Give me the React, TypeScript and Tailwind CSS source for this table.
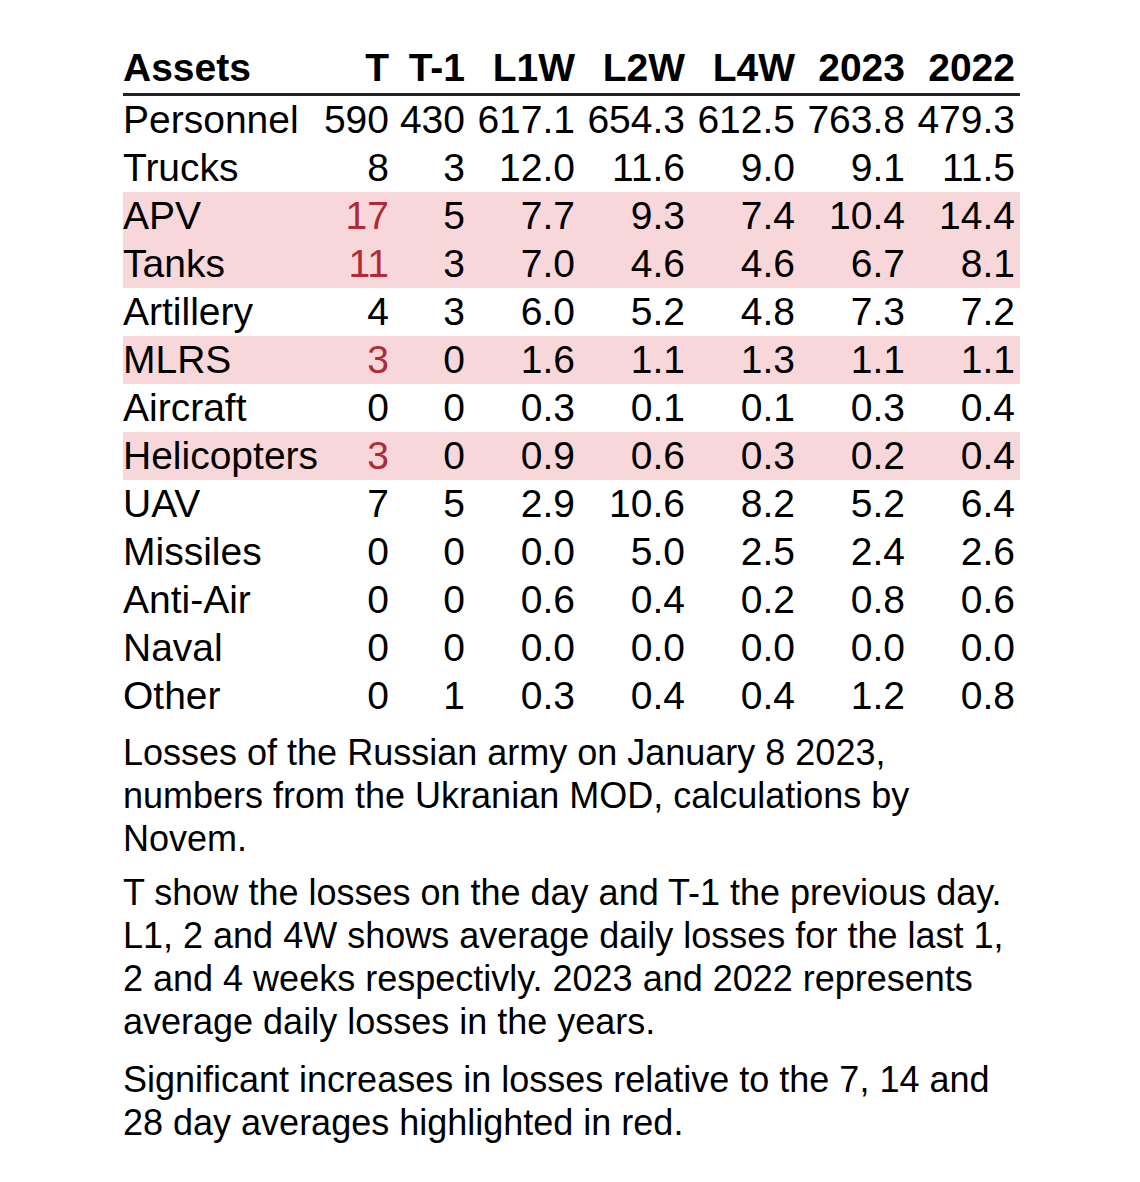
type Row = {
  name: string;
  t: string;
  t1: string;
  l1w: string;
  l2w: string;
  l4w: string;
  y2023: string;
  y2022: string;
  hot?: boolean;
};

const rows: Row[] = [
  { name: 'Personnel', t: '590', t1: '430', l1w: '617.1', l2w: '654.3', l4w: '612.5', y2023: '763.8', y2022: '479.3' },
  { name: 'Trucks', t: '8', t1: '3', l1w: '12.0', l2w: '11.6', l4w: '9.0', y2023: '9.1', y2022: '11.5' },
  { name: 'APV', t: '17', t1: '5', l1w: '7.7', l2w: '9.3', l4w: '7.4', y2023: '10.4', y2022: '14.4', hot: true },
  { name: 'Tanks', t: '11', t1: '3', l1w: '7.0', l2w: '4.6', l4w: '4.6', y2023: '6.7', y2022: '8.1', hot: true },
  { name: 'Artillery', t: '4', t1: '3', l1w: '6.0', l2w: '5.2', l4w: '4.8', y2023: '7.3', y2022: '7.2' },
  { name: 'MLRS', t: '3', t1: '0', l1w: '1.6', l2w: '1.1', l4w: '1.3', y2023: '1.1', y2022: '1.1', hot: true },
  { name: 'Aircraft', t: '0', t1: '0', l1w: '0.3', l2w: '0.1', l4w: '0.1', y2023: '0.3', y2022: '0.4' },
  { name: 'Helicopters', t: '3', t1: '0', l1w: '0.9', l2w: '0.6', l4w: '0.3', y2023: '0.2', y2022: '0.4', hot: true },
  { name: 'UAV', t: '7', t1: '5', l1w: '2.9', l2w: '10.6', l4w: '8.2', y2023: '5.2', y2022: '6.4' },
  { name: 'Missiles', t: '0', t1: '0', l1w: '0.0', l2w: '5.0', l4w: '2.5', y2023: '2.4', y2022: '2.6' },
  { name: 'Anti-Air', t: '0', t1: '0', l1w: '0.6', l2w: '0.4', l4w: '0.2', y2023: '0.8', y2022: '0.6' },
  { name: 'Naval', t: '0', t1: '0', l1w: '0.0', l2w: '0.0', l4w: '0.0', y2023: '0.0', y2022: '0.0' },
  { name: 'Other', t: '0', t1: '1', l1w: '0.3', l2w: '0.4', l4w: '0.4', y2023: '1.2', y2022: '0.8' },
];

// asset | T | T-1 | L1W | L2W | L4W | 2023 | 2022
const cols = 'grid grid-cols-[189px_82px_76px_110px_110px_110px_110px_110px]';

export default function App() {
  return (
    <div className="min-h-[1182px] bg-white font-['Liberation_Sans',Arial,sans-serif] text-black">
      <div className="ml-[123px] w-[897px] pt-[44px]">
        <div className={`${cols} h-[48px] text-[39px] font-bold leading-[48px]`}>
          <div>Assets</div>
          <div className="pr-[5px] text-right">T</div>
          <div className="pr-[5px] text-right">T-1</div>
          <div className="pr-[5px] text-right">L1W</div>
          <div className="pr-[5px] text-right">L2W</div>
          <div className="pr-[5px] text-right">L4W</div>
          <div className="pr-[5px] text-right">2023</div>
          <div className="pr-[5px] text-right">2022</div>
        </div>
        <div className="mt-px h-[3px] bg-[#222]" />

        {rows.map((r) => (
          <div
            key={r.name}
            className={`${cols} h-[48px] text-[39px] leading-[48px] ${r.hot ? 'bg-[#f8d7da]' : ''}`}
          >
            <div className="whitespace-nowrap">{r.name}</div>
            <div className={`pr-[5px] text-right ${r.hot ? 'text-[#b02a37]' : ''}`}>{r.t}</div>
            <div className="pr-[5px] text-right">{r.t1}</div>
            <div className="pr-[5px] text-right">{r.l1w}</div>
            <div className="pr-[5px] text-right">{r.l2w}</div>
            <div className="pr-[5px] text-right">{r.l4w}</div>
            <div className="pr-[5px] text-right">{r.y2023}</div>
            <div className="pr-[5px] text-right">{r.y2022}</div>
          </div>
        ))}

        <div className="whitespace-nowrap text-[36px] leading-[43px]">
          <p className="mt-[11px]">
            Losses of the Russian army on January 8 2023,
            <br />
            numbers from the Ukranian MOD, calculations by
            <br />
            Novem.
          </p>
          <p className="mt-[11px]">
            T show the losses on the day and T-1 the previous day.
            <br />
            L1, 2 and 4W shows average daily losses for the last 1,
            <br />
            2 and 4 weeks respectivly. 2023 and 2022 represents
            <br />
            average daily losses in the years.
          </p>
          <p className="mt-[15px]">
            Significant increases in losses relative to the 7, 14 and
            <br />
            28 day averages highlighted in red.
          </p>
        </div>
      </div>
    </div>
  );
}
